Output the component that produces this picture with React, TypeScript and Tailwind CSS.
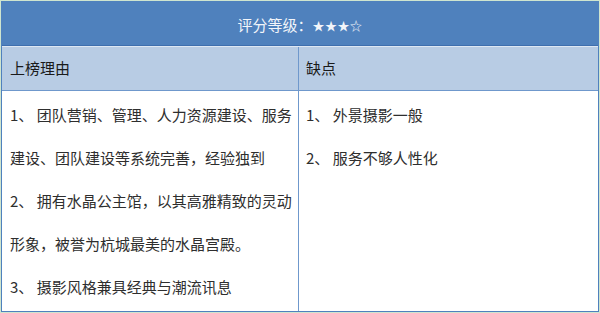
import React from 'react';

const pros = [
  '1、 团队营销、管理、人力资源建设、服务',
  '建设、团队建设等系统完善，经验独到',
  '2、 拥有水晶公主馆，以其高雅精致的灵动',
  '形象，被誉为杭城最美的水晶宫殿。',
  '3、 摄影风格兼具经典与潮流讯息',
];

const cons = ['1、 外景摄影一般', '2、 服务不够人性化'];

const font = { fontFamily: '"Microsoft YaHei", "Noto Sans CJK SC", sans-serif' };

export default function App() {
  return (
    <div className="w-[600px] h-[313px] bg-[#cfe5cf] p-px" style={font}>
      <div className="w-[598px] h-[311px] border border-[#4f81bd] flex flex-col bg-white">
        {/* title band */}
        <div className="h-[44px] pt-[4px] bg-[#4f81bd] flex items-center justify-center text-[15px] text-[#f2f5fa] border-b border-[#3f6fae]">
          评分等级：<span className="text-[12px] tracking-[0.5px]">★★★☆</span>
        </div>
        <div className="h-px bg-[#dde7f3]" />
        {/* header row */}
        <div className="grid grid-cols-[297px_1fr] h-[44px] bg-[#b8cce4] border-b border-[#6f98cc] text-[15px] text-[#1a1a1a]">
          <div className="flex items-center pl-[8px] border-r border-[#6f98cc]">上榜理由</div>
          <div className="flex items-center pl-[7px]">缺点</div>
        </div>
        {/* body */}
        <div className="grid grid-cols-[297px_1fr] flex-1 text-[15px] text-[#2e2e2e]">
          <div className="border-r border-[#6f98cc] pl-[8px] pt-[2px] leading-[43px]">
            {pros.map((t) => (
              <div key={t} className="whitespace-nowrap">{t}</div>
            ))}
          </div>
          <div className="pl-[7px] pt-[2px] leading-[43px]">
            {cons.map((t) => (
              <div key={t} className="whitespace-nowrap">{t}</div>
            ))}
          </div>
        </div>
      </div>
    </div>
  );
}
